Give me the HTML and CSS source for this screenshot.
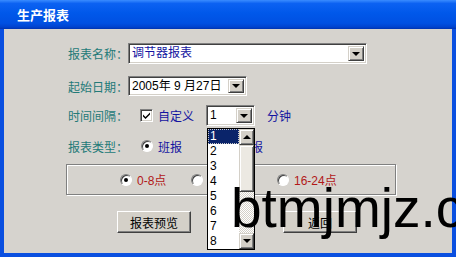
FILE: index.html
```html
<!DOCTYPE html>
<html lang="zh-CN">
<head>
  <meta charset="UTF-8" />
  <title>生产报表</title>
  <link rel="stylesheet" href="styles.css">
</head>
<body>
  <div class="window">
    <div class="titlebar">生产报表</div>

    <div class="client">
      <div class="row row-name">
        <span class="label">报表名称：</span>
        <div class="combo combo-name">
          <span class="combo-text blue">调节器报表</span>
          <span class="drop-btn"><i class="arrow-down"></i></span>
        </div>
      </div>

      <div class="row row-date">
        <span class="label">起始日期：</span>
        <div class="combo combo-date">
          <span class="combo-text">2005年 9 月27日</span>
          <span class="drop-btn"><i class="arrow-down"></i></span>
        </div>
      </div>

      <div class="row row-interval">
        <span class="label">时间间隔：</span>
        <span class="check">
          <svg width="9" height="9" viewBox="0 0 9 9"><path d="M1 3.5 L3.5 6 L8 1.5 L8 3.5 L3.5 8 L1 5.5 Z" fill="#000"/></svg>
        </span>
        <span class="opt-text blue">自定义</span>
        <div class="combo combo-min">
          <span class="combo-text">1</span>
          <span class="drop-btn"><i class="arrow-down"></i></span>
        </div>
        <span class="unit blue">分钟</span>
      </div>

      <div class="row row-type">
        <span class="label">报表类型：</span>
        <span class="radio on"></span>
        <span class="opt-text blue">班报</span>
        <span class="radio radio-day"></span>
        <span class="opt-text blue">日报</span>
      </div>

      <div class="group">
        <span class="opt opt-1"><span class="radio on"></span><span class="opt-text red">0-8点</span></span>
        <span class="opt opt-2"><span class="radio"></span><span class="opt-text red">8-16点</span></span>
        <span class="opt opt-3"><span class="radio"></span><span class="opt-text red">16-24点</span></span>
      </div>

      <div class="buttons">
        <button class="btn">报表预览</button>
        <button class="btn">返回</button>
      </div>

      <div class="listbox">
        <ul class="list-items">
          <li class="selected"><span>1</span></li>
          <li>2</li>
          <li>3</li>
          <li>4</li>
          <li>5</li>
          <li>6</li>
          <li>7</li>
          <li>8</li>
        </ul>
        <div class="scrollbar">
          <span class="sb-btn"><i class="arrow-up"></i></span>
          <span class="sb-thumb"></span>
          <span class="sb-track"></span>
          <span class="sb-btn"><i class="arrow-down"></i></span>
        </div>
      </div>
    </div>

    <div class="watermark">btmjmjz.c</div>
  </div>
</body>
</html>
```

FILE: styles.css
```css
body {
  margin: 0;
  width: 456px;
  height: 257px;
  overflow: hidden;
  font-family: "Noto Sans CJK SC", sans-serif;
  font-size: 12px;
}

.window {
  position: relative;
  width: 456px;
  height: 257px;
  box-sizing: border-box;
  background: #0a4fe0;
  display: flex;
  flex-direction: column;
  overflow: hidden;
}

.titlebar {
  height: 29px;
  box-sizing: border-box;
  padding: 6px 0 0 17px;
  color: #fff;
  font-size: 13px;
  font-weight: 700;
  line-height: 17px;
  background: linear-gradient(#3a8cff 0%, #0c62f2 12%, #0058ea 45%, #0050e2 80%, #0043cf 93%, #0033b0 100%);
}

.client {
  position: relative;
  flex: 1;
  margin: 0 4px 4px 4px;
  background: #d6d3ce;
  padding-top: 14px;
  display: flex;
  flex-direction: column;
}

.row {
  display: flex;
  align-items: center;
  padding-left: 64px;
}

.row-name { height: 21px; }
.row-date { height: 20px; margin-top: 12px; }
.row-interval { height: 21px; margin-top: 9px; }
.row-type { height: 20px; margin-top: 10px; }

.label {
  width: 60px;
  color: #237a78;
  white-space: nowrap;
}

.blue { color: #1414a0; }
.red { color: #b21818; }

/* sunken combo box */
.combo {
  height: 100%;
  box-sizing: border-box;
  display: flex;
  align-items: stretch;
  background: #fff;
  border: 1px solid;
  border-color: #808080 #fff #fff #808080;
  box-shadow: inset 1px 1px 0 #404040, inset -1px -1px 0 #d4d0c8;
  padding: 2px;
}

.combo-name { width: 239px; }
.combo-date { width: 119px; }
.combo-min { width: 49px; margin-left: 12px; }

.combo-text {
  flex: 1;
  padding-left: 1px;
  line-height: 15px;
  white-space: nowrap;
  font-family: "Liberation Sans", "Noto Sans CJK SC", sans-serif;
}

.drop-btn {
  width: 16px;
  box-sizing: border-box;
  background: #d4d0c8;
  border: 1px solid;
  border-color: #d4d0c8 #404040 #404040 #d4d0c8;
  box-shadow: inset 1px 1px 0 #fff, inset -1px -1px 0 #808080;
  display: flex;
  align-items: center;
  justify-content: center;
}

.arrow-down {
  width: 0;
  height: 0;
  border-left: 4px solid transparent;
  border-right: 4px solid transparent;
  border-top: 4px solid #000;
}

.arrow-up {
  width: 0;
  height: 0;
  border-left: 4px solid transparent;
  border-right: 4px solid transparent;
  border-bottom: 4px solid #000;
}

.check {
  width: 13px;
  height: 13px;
  box-sizing: border-box;
  margin-left: 12px;
  background: #fff;
  border: 1px solid;
  border-color: #808080 #fff #fff #808080;
  box-shadow: inset 1px 1px 0 #404040, inset -1px -1px 0 #d4d0c8;
  display: flex;
  align-items: center;
  justify-content: center;
}

.opt-text {
  margin-left: 5px;
  white-space: nowrap;
  font-family: "Liberation Sans", "Noto Sans CJK SC", sans-serif;
}

.unit { margin-left: 12px; }

.radio {
  position: relative;
  width: 12px;
  height: 12px;
  box-sizing: border-box;
  flex-shrink: 0;
  border-radius: 50%;
  background: #fff;
  border: 1px solid;
  border-color: #808080 #fff #fff #808080;
  box-shadow: inset 1px 1px 0 #404040;
}

.row-type .radio { margin-left: 13px; }
.row-type .radio-day { margin-left: 40px; }

.radio.on::after {
  content: "";
  position: absolute;
  left: 3px;
  top: 3px;
  width: 4px;
  height: 4px;
  border-radius: 50%;
  background: #000;
}

.group {
  margin: 8px 0 0 62px;
  width: 330px;
  height: 31px;
  box-sizing: border-box;
  border: 1px solid #808080;
  box-shadow: inset 1px 1px 0 #fff, 1px 1px 0 #fff;
  display: flex;
  align-items: center;
  padding-left: 53px;
}

.opt {
  display: flex;
  align-items: center;
}

.opt-1 { width: 71px; }
.opt-2 { width: 86px; }

.buttons {
  margin: 16px 0 0 113px;
  display: flex;
  gap: 92px;
}

.btn {
  width: 74px;
  height: 22px;
  padding: 0;
  font-family: "Noto Sans CJK SC", sans-serif;
  font-size: 12px;
  color: #000;
  background: #d4d0c8;
  border: 1px solid;
  border-color: #fff #404040 #404040 #fff;
  box-shadow: inset -1px -1px 0 #808080;
}

/* open drop-down list of the minutes combo */
.listbox {
  position: absolute;
  left: 203px;
  top: 99px;
  width: 48px;
  height: 122px;
  box-sizing: border-box;
  border: 1px solid #000;
  background: #fff;
  display: flex;
}

.list-items {
  list-style: none;
  margin: 0;
  padding: 0;
  flex: 1;
  font-family: "Liberation Sans", sans-serif;
  font-size: 12px;
}

.list-items li {
  height: 15px;
  line-height: 15px;
  padding-left: 2px;
  color: #000;
}

.list-items li.selected {
  padding: 0;
  background: #0a246a;
  color: #fff;
}

.list-items li.selected span {
  display: block;
  height: 15px;
  box-sizing: border-box;
  padding-left: 1px;
  line-height: 13px;
  border: 1px dotted #c8c8c8;
}

.scrollbar {
  width: 15px;
  display: flex;
  flex-direction: column;
}

.sb-btn {
  height: 16px;
  box-sizing: border-box;
  background: #d4d0c8;
  border: 1px solid;
  border-color: #d4d0c8 #404040 #404040 #d4d0c8;
  box-shadow: inset 1px 1px 0 #fff, inset -1px -1px 0 #808080;
  display: flex;
  align-items: center;
  justify-content: center;
}

.sb-thumb {
  height: 47px;
  box-sizing: border-box;
  background: #ece9e2;
  border: 1px solid;
  border-color: #d4d0c8 #404040 #404040 #d4d0c8;
  box-shadow: inset 1px 1px 0 #fff, inset -1px -1px 0 #808080;
}

.sb-track {
  flex: 1;
  background-color: #fff;
  background-image: repeating-conic-gradient(#d4d0c8 0 25%, #fff 0 50%);
  background-size: 2px 2px;
}

.watermark {
  position: absolute;
  left: 231px;
  top: 181px;
  font-family: "Liberation Sans", sans-serif;
  font-size: 55px;
  line-height: 55px;
  color: #000;
  white-space: nowrap;
  pointer-events: none;
}
```
